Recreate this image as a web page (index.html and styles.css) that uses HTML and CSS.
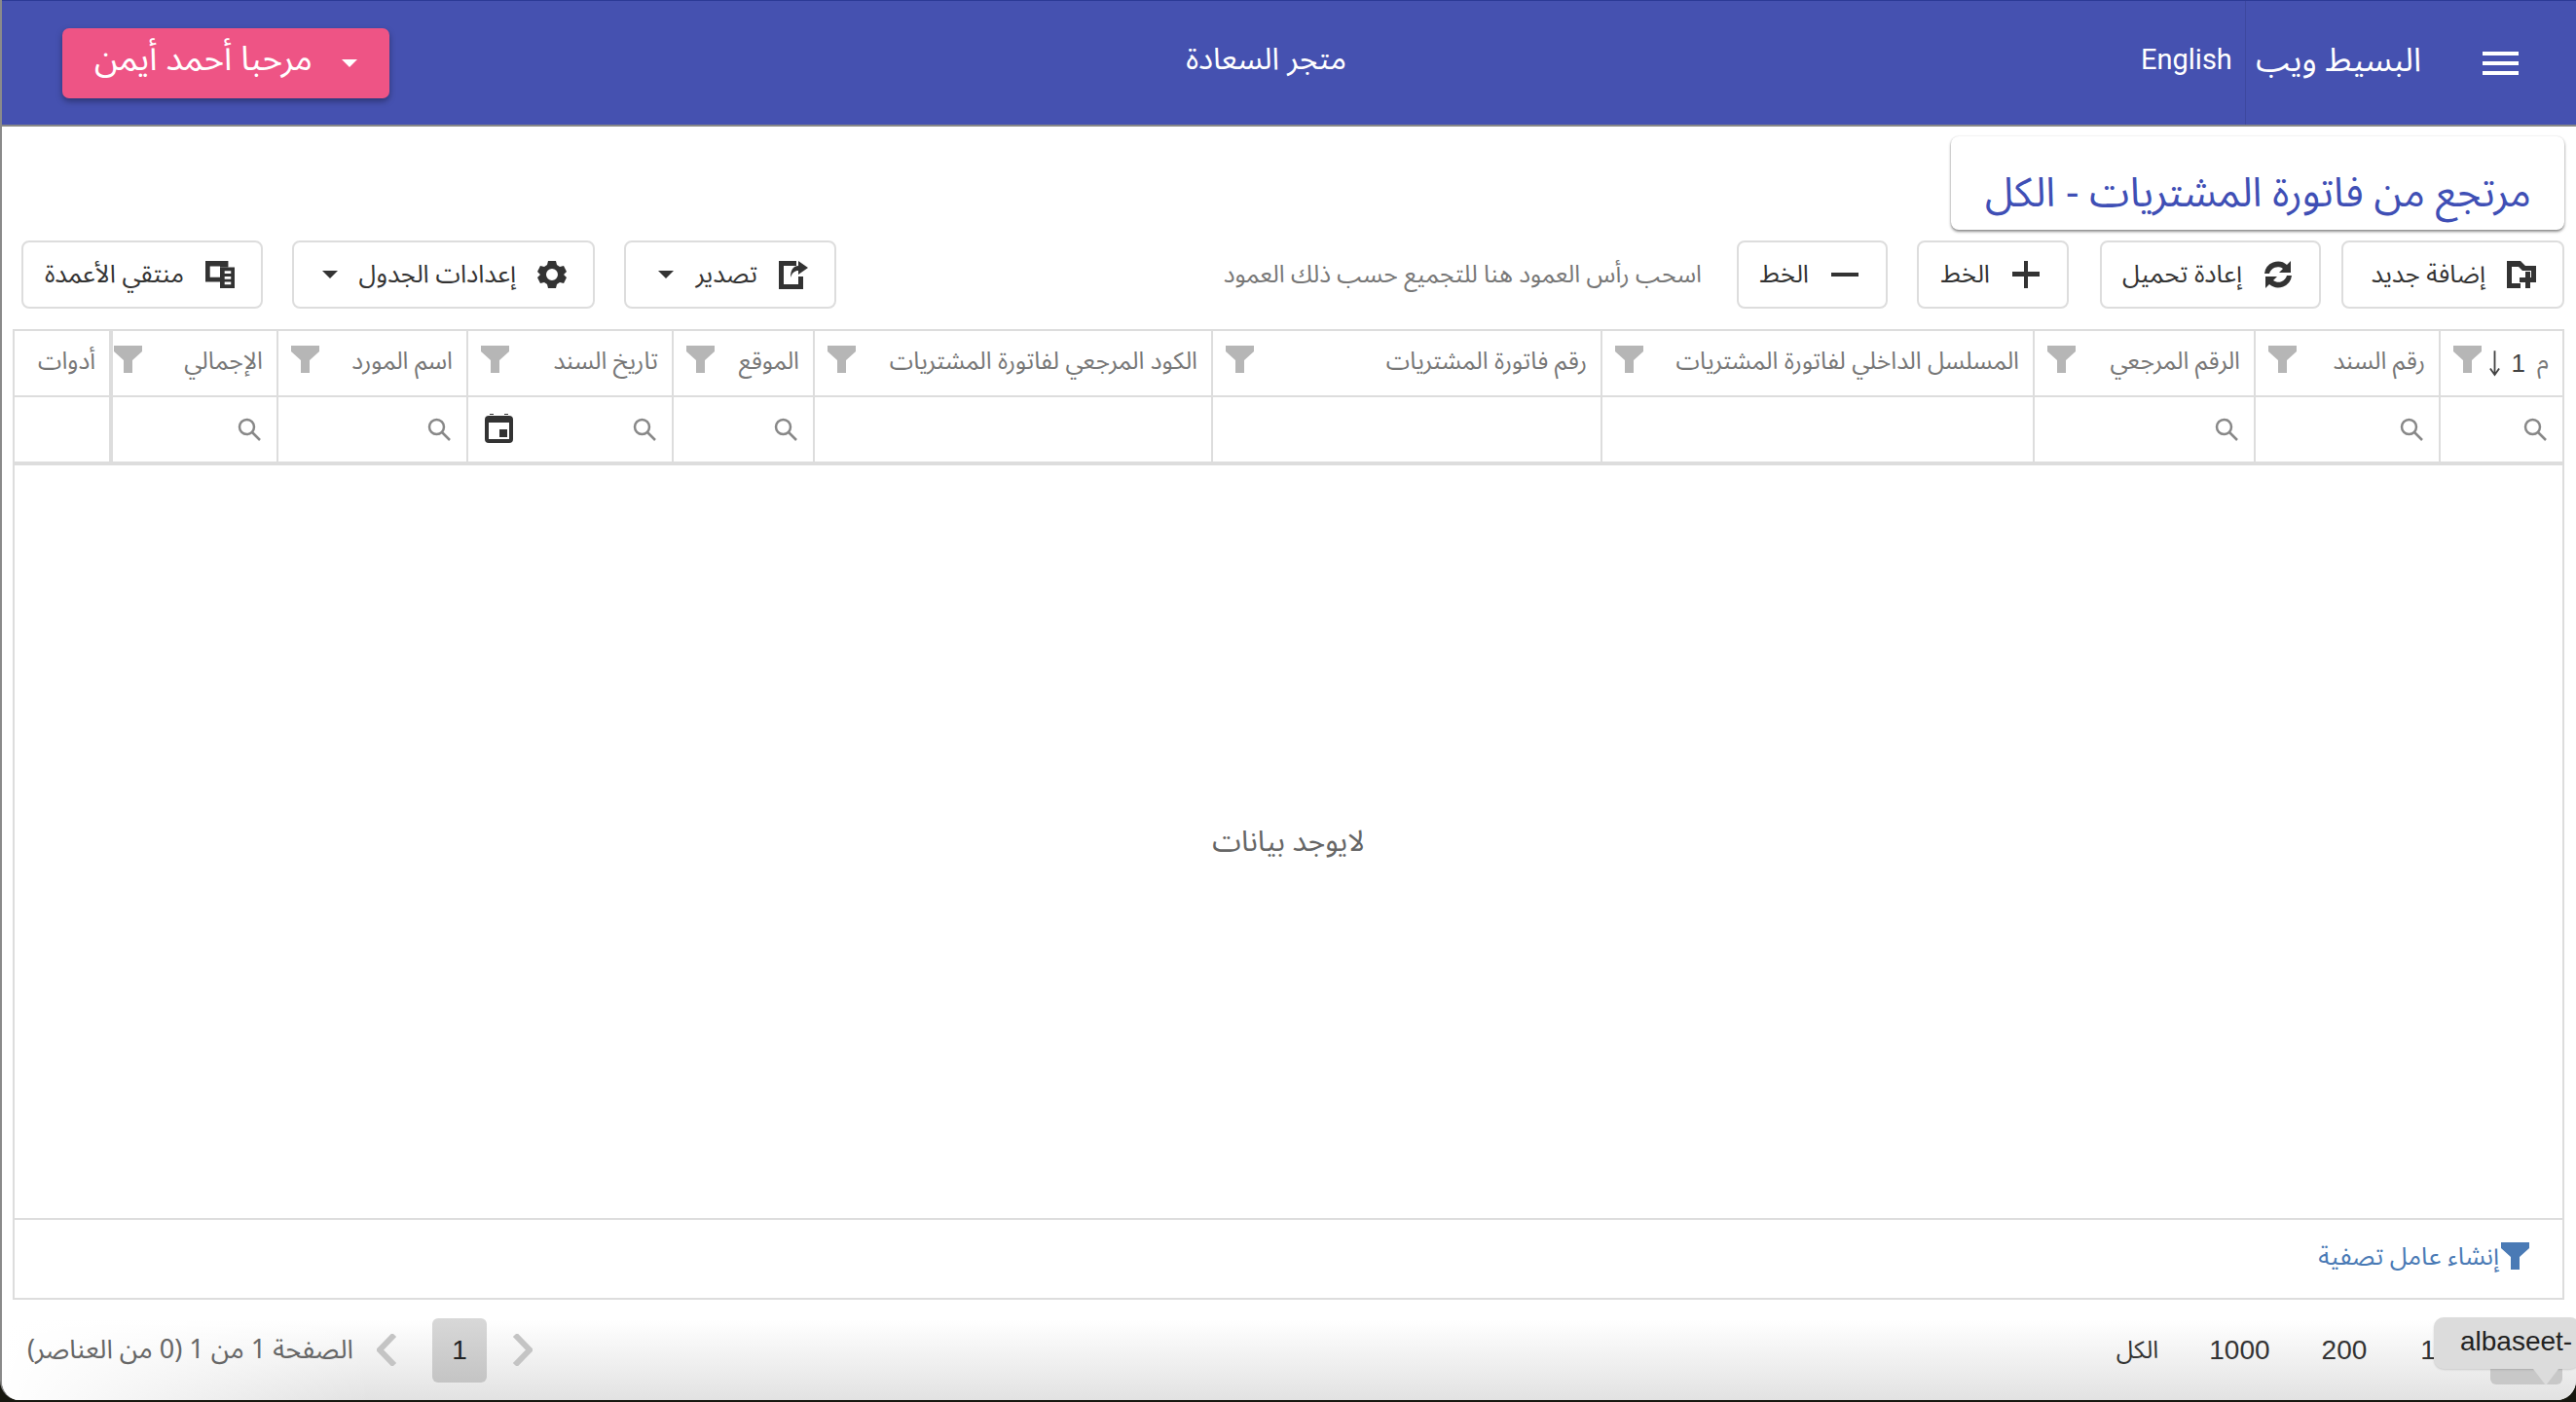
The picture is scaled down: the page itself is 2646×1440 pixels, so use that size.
FILE: index.html
```html
<!DOCTYPE html>
<html lang="ar" dir="rtl">
<head>
<meta charset="utf-8">
<title>مرتجع من فاتورة المشتريات</title>
<link rel="stylesheet" href="styles.css">
</head>
<body>
<div class="window">
  <header class="topbar">
    <svg class="burger" viewBox="0 0 37 24"><path d="M0 0h37v4H0zM0 10h37v4H0zM0 20h37v4H0z" fill="#fff"/></svg>
    <span class="brand">البسيط ويب</span>
    <span class="sep"></span>
    <span class="lang" dir="ltr">English</span>
    <span class="store">متجر السعادة</span>
    <button class="user"><span class="caret caret-w"></span><span class="user-name">مرحبا أحمد أيمن</span></button>
  </header>

  <div class="title-row"><h1 class="title-card"><span>مرتجع من فاتورة المشتريات - الكل</span></h1></div>

  <div class="toolbar">
    <button class="tbtn w-add"><svg class="ico" viewBox="0 0 30 28"><path d="M0 0h14l5 5h11v14h-5V10H16l-4-4H5v17h9v5H0z" fill="#333"/><path d="M19 11h5v6h6v5h-6v6h-5v-6h-6v-5h6z" fill="#333"/></svg><span>إضافة جديد</span></button>
    <button class="tbtn w-reload"><svg class="ico" viewBox="0 0 30 30"><path d="M1 14A14 14 0 0 1 24 5l4-4v12H16l4-4a9 9 0 0 0-14 5z" fill="#333"/><path d="M29 16A14 14 0 0 1 6 25l-4 4V17h12l-4 4a9 9 0 0 0 14-5z" fill="#333"/></svg><span>إعادة تحميل</span></button>
    <button class="tbtn w-plus"><svg class="ico" viewBox="0 0 30 30"><path d="M13 1h4v11h12v5H17v12h-4V17H1v-5h12z" fill="#333"/></svg><span>الخط</span></button>
    <button class="tbtn w-minus"><svg class="ico" viewBox="0 0 30 30"><path d="M1 13h28v4H1z" fill="#333"/></svg><span>الخط</span></button>
    <span class="hint">اسحب رأس العمود هنا للتجميع حسب ذلك العمود</span>
    <button class="tbtn w-export"><svg class="ico" viewBox="0 0 30 30"><path d="M0 1h18v5H5v19h15v-8h5v13H0z" fill="#333"/><path d="M20 1l10 7-10 7v-4c-4 0-6 2-8 7 0-8 3-12 8-12z" fill="#333"/></svg><span>تصدير</span><span class="caret"></span></button>
    <button class="tbtn w-settings"><svg class="ico" viewBox="0 0 30 30"><path fill="#333" fill-rule="evenodd" d="M11 1h8l1 4 3 2 4-1 3 6-3 3 3 3-3 6-4-1-3 2-1 4h-8l-1-4-3-2-4 1-3-6 3-3-3-3 3-6 4 1 3-2zM15 9a6 6 0 1 0 0 12 6 6 0 0 0 0-12z"/></svg><span>إعدادات الجدول</span><span class="caret"></span></button>
    <button class="tbtn w-cols"><svg class="ico" viewBox="0 0 32 30"><path fill="#333" d="M0 0h25v7H16v16H0zM5 6v12h11V6z" fill-rule="evenodd"/><path fill="#333" fill-rule="evenodd" d="M16 7h16v23H16zM21 11v3h7v-3zM21 17v3h7v-3zM21 23v3h7v-3z"/></svg><span>منتقي الأعمدة</span></button>
  </div>

  <div class="grid">
    <div class="cell head"><span class="h-text">م</span><span class="sort">1<svg class="arrow" viewBox="0 0 12 28"><path d="M6 0v26M1 20l5 7 5-7" fill="none" stroke="#444" stroke-width="2"/></svg></span><svg class="funnel" viewBox="0 0 29 28"><path d="M0 0h29v6L19 15v13H10V15L0 6z"/></svg></div>
    <div class="cell head"><span class="h-text">رقم السند</span><svg class="funnel" viewBox="0 0 29 28"><path d="M0 0h29v6L19 15v13H10V15L0 6z"/></svg></div>
    <div class="cell head"><span class="h-text">الرقم المرجعي</span><svg class="funnel" viewBox="0 0 29 28"><path d="M0 0h29v6L19 15v13H10V15L0 6z"/></svg></div>
    <div class="cell head"><span class="h-text">المسلسل الداخلي لفاتورة المشتريات</span><svg class="funnel" viewBox="0 0 29 28"><path d="M0 0h29v6L19 15v13H10V15L0 6z"/></svg></div>
    <div class="cell head"><span class="h-text">رقم فاتورة المشتريات</span><svg class="funnel" viewBox="0 0 29 28"><path d="M0 0h29v6L19 15v13H10V15L0 6z"/></svg></div>
    <div class="cell head"><span class="h-text">الكود المرجعي لفاتورة المشتريات</span><svg class="funnel" viewBox="0 0 29 28"><path d="M0 0h29v6L19 15v13H10V15L0 6z"/></svg></div>
    <div class="cell head"><span class="h-text">الموقع</span><svg class="funnel" viewBox="0 0 29 28"><path d="M0 0h29v6L19 15v13H10V15L0 6z"/></svg></div>
    <div class="cell head"><span class="h-text">تاريخ السند</span><svg class="funnel" viewBox="0 0 29 28"><path d="M0 0h29v6L19 15v13H10V15L0 6z"/></svg></div>
    <div class="cell head"><span class="h-text">اسم المورد</span><svg class="funnel" viewBox="0 0 29 28"><path d="M0 0h29v6L19 15v13H10V15L0 6z"/></svg></div>
    <div class="cell head"><span class="h-text">الإجمالي</span><svg class="funnel funnel-edge" viewBox="0 0 29 28"><path d="M0 0h29v6L19 15v13H10V15L0 6z"/></svg></div>
    <div class="cell head fixed"><span class="h-text">أدوات</span></div>

    <div class="cell filt"><svg class="search" viewBox="0 0 24 24"><circle cx="9.500" cy="9.500" r="7.500"/><path d="M15 15l8 8"/></svg></div>
    <div class="cell filt"><svg class="search" viewBox="0 0 24 24"><circle cx="9.500" cy="9.500" r="7.500"/><path d="M15 15l8 8"/></svg></div>
    <div class="cell filt"><svg class="search" viewBox="0 0 24 24"><circle cx="9.500" cy="9.500" r="7.500"/><path d="M15 15l8 8"/></svg></div>
    <div class="cell filt"></div>
    <div class="cell filt"></div>
    <div class="cell filt"></div>
    <div class="cell filt"><svg class="search" viewBox="0 0 24 24"><circle cx="9.500" cy="9.500" r="7.500"/><path d="M15 15l8 8"/></svg></div>
    <div class="cell filt"><svg class="search" viewBox="0 0 24 24"><circle cx="9.500" cy="9.500" r="7.500"/><path d="M15 15l8 8"/></svg><svg class="cal" viewBox="0 0 29 30"><path fill="#333" d="M5 0h4v1H5zM20 0h4v1h-4z"/><path fill="#333" d="M4 2h21a4 4 0 0 1 4 4v20a4 4 0 0 1-4 4H4a4 4 0 0 1-4-4V6a4 4 0 0 1 4-4z"/><path fill="#fff" d="M4 9h21v17H4z"/><path fill="#333" d="M15 16h8v8h-8z"/></svg></div>
    <div class="cell filt"><svg class="search" viewBox="0 0 24 24"><circle cx="9.500" cy="9.500" r="7.500"/><path d="M15 15l8 8"/></svg></div>
    <div class="cell filt"><svg class="search" viewBox="0 0 24 24"><circle cx="9.500" cy="9.500" r="7.500"/><path d="M15 15l8 8"/></svg></div>
    <div class="cell filt fixed"></div>

    <div class="empty">لايوجد بيانات</div>
    <div class="builder"><svg class="funnel-blue" viewBox="0 0 29 28"><path d="M0 0h29v6L19 15v13H10V15L0 6z"/></svg><span>إنشاء عامل تصفية</span></div>
  </div>

  <footer class="pager">
    <div class="sizes">
      <span class="current"></span>
      <span class="size s-100">100</span>
      <span class="size s-200">200</span>
      <span class="size s-1000">1000</span>
      <span class="size s-all">الكل</span>
    </div>
    <div class="pages">
      <svg class="chev chev-next" viewBox="0 0 21 33"><path d="M3 1l15 15.500-15 15.500" /></svg>
      <span class="page-num">1</span>
      <svg class="chev" viewBox="0 0 21 33"><path d="M18 1L3 16.500 18 32" /></svg>
      <span class="page-info">الصفحة 1 من 1 (0 من العناصر)</span>
    </div>
    <div class="tip" dir="ltr">albaseet-</div>
    <span class="tip-arrow"></span>
  </footer>
</div>
</body>
</html>
```

FILE: styles.css
```css
* { box-sizing: border-box; }
html, body { margin: 0; height: 100%; }
body { background: #17170f; font-family: "Noto Sans Arabic", "DejaVu Sans", sans-serif; overflow: hidden; }
.window { position: relative; height: 1438px; background: #fff; border-left: 2px solid #8a8a8a; border-radius: 0 0 20px 20px; overflow: hidden; display: flex; flex-direction: column; }
.topbar { flex: none; height: 130px; background: #4551b0; border-top: 1px solid #2c3a96; border-bottom: 2px solid #888; display: flex; align-items: center; padding: 0 59px 0 62px; color: #fff; }
.burger { width: 37px; height: 24px; margin-left: 63px; margin-top: 0; flex: none; }
.brand { font-size: 34px; width: 169px; margin-left: 11px; white-space: nowrap; margin-top: -6px; }
.sep { width: 1px; height: 127px; background: #3d489f; }
.lang { font-family: Roboto, sans-serif; font-size: 29px; width: 94px; margin-right: 13px; margin-top: -8px; }
.store { font-size: 31.500px; margin-right: 816px; width: 166px; white-space: nowrap; margin-top: -7px; }
.user { margin-right: auto; width: 336px; height: 72px; border: 0; border-radius: 7px; background: #ee5485; box-shadow: 0 3px 6px rgba(0,0,0,.35); color: #fff; font: inherit; font-size: 35px; display: flex; align-items: center; padding: 0 33px 0 0; gap: 30px; }
.user-name { white-space: nowrap; margin-top: -8px; }
.caret { width: 0; height: 0; border: 8px solid transparent; border-top: 8px solid #333; border-bottom: 0; flex: none; }
.caret-w { border-top-color: #fff; }
.title-row { flex: none; display: flex; padding: 10px 12px 0; }
.title-card { margin: 0; width: 630px; height: 96px; background: #fff; border-radius: 8px; box-shadow: 0 2px 3px rgba(0,0,0,.45), 0 0 2px rgba(0,0,0,.12); color: #3f4fb5; font-size: 41.700px; line-height: 50px; font-weight: 400; padding: 34px 34px 0 0; white-space: nowrap; }
.toolbar { flex: none; margin-top: 11px; height: 70px; display: flex; align-items: stretch; padding: 0 12px 0 20px; }
.tbtn { height: 70px; background: #fff; border: 2px solid #ddd; border-radius: 8px; display: flex; align-items: center; padding: 0 27px 0 0; gap: 22px; font: inherit; font-size: 25.700px; color: #333; white-space: nowrap; flex: none; }
.ico { width: 30px; height: 30px; flex: none; }
.w-add { width: 229px; margin-left: 21px; }
.w-reload { width: 227px; margin-left: 32px; }
.w-plus { width: 156px; margin-left: 30px; }
.w-minus { width: 155px; margin-left: 36px; }
.w-export { width: 218px; margin-left: 30px; padding-left: 33px; }
.w-settings { width: 311px; margin-left: 30px; padding-left: 33px; }
.w-cols { width: 248px; }
.w-export .caret, .w-settings .caret { margin-right: auto; }
.hint { align-self: center; font-size: 24.700px; color: #777; white-space: nowrap; margin-left: auto; }
.grid { margin: 21px 12px 0 11px; height: 997px; flex: none; border: 2px solid #ddd; display: grid; grid-template-columns: 127px 190px 227px 444px 400px 409px 145px 211px 195px 170px 1fr; grid-template-rows: 68px 70px 1fr 80px; }
.cell { border-left: 2px solid #ddd; border-bottom: 2px solid #ddd; display: flex; align-items: center; position: relative; padding: 0 14px; min-width: 0; }
.cell:nth-child(11), .cell:nth-child(22) { border-left: 0; }
.head { color: #777; font-size: 24.700px; white-space: nowrap; }
.h-text { margin-top: -4px; }
.filt { border-bottom: 4px solid #ddd; padding-right: 16px; }
.fixed { border-right: 2px solid #ddd; }
.sort { display: flex; align-items: center; gap: 12px; margin-right: 12px; font: 26px "Liberation Sans", sans-serif; color: #444; }
.arrow { width: 11px; height: 28px; }
.funnel { position: absolute; left: 13px; top: 15px; width: 29px; height: 28px; fill: #b6b6b6; }
.funnel-edge { left: 1px; }
.search { width: 24px; height: 24px; fill: none; stroke: #888; stroke-width: 2.500; }
.cal { position: absolute; left: 17px; top: 17px; width: 29px; height: 30px; }
.empty { grid-column: 1 / -1; display: flex; align-items: center; justify-content: center; color: #666; font-size: 30px; border-bottom: 2px solid #ddd; }
.builder { grid-column: 1 / -1; display: flex; align-items: center; padding-right: 34px; color: #4a7ab5; font-size: 25.700px; gap: 2px; }
.funnel-blue { width: 29px; height: 28px; fill: #4a7ab5; flex: none; margin-top: -6px; }
.builder span { margin-top: -4px; }
.pager { flex: 1; position: relative; display: flex; justify-content: space-between; align-items: center; background: linear-gradient(90deg, #fff 0, rgba(255,255,255,0) 380px), linear-gradient(#fff 20%, #e2e2e2 100%); padding: 0 0 0 26px; color: #333; }
.sizes { display: flex; align-items: center; height: 68px; padding-right: 14px; margin-top: 2px; }
.size { font: 28px "Liberation Sans", sans-serif; text-align: center; margin-top: -2px; }
.current { width: 74px; height: 68px; background: #c8c8c8; border-radius: 6px; margin-left: 25px; flex: none; }
.s-100 { margin-left: 55px; }
.s-200 { margin-left: 53px; }
.s-1000 { margin-left: 52px; }
.s-all { font-family: "Noto Sans Arabic", "DejaVu Sans", sans-serif; font-size: 25px; }
.pages { display: flex; align-items: center; color: #666; font-size: 27px; }
.chev { width: 21px; height: 33px; fill: none; stroke: #c4c4c4; stroke-width: 6; flex: none; }
.page-num { width: 56px; height: 66px; margin: 0 26px 0 36px; border-radius: 6px; background: linear-gradient(#d8d8d8, #c4c4c4); display: flex; align-items: center; justify-content: center; color: #222; font: 28px "Liberation Sans", sans-serif; }
.pages .chev:nth-child(3) { margin-left: 24px; }
.page-info { white-space: nowrap; }
.tip { position: absolute; right: -4px; top: 18px; width: 150px; height: 53px; background: #dcdcdc; border-radius: 10px; font: 28px/50px "Liberation Sans", sans-serif; color: #222; padding-left: 27px; box-shadow: 0 1px 2px rgba(0,0,0,.15); white-space: nowrap; overflow: hidden; }
.tip-arrow { position: absolute; left: 2600px; top: 71px; border: 13px solid transparent; border-top: 17px solid #dcdcdc; border-bottom: 0; }
```
